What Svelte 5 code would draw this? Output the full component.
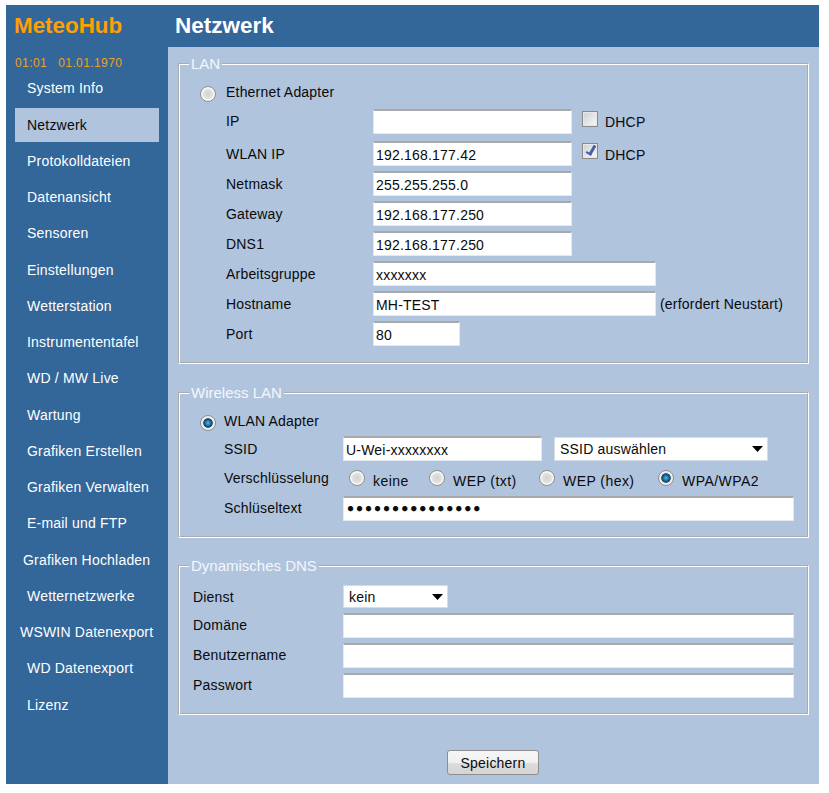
<script lang="ts">
  // MeteoHub network settings page
  const menu = [
    { label: 'System Info' },
    { label: 'Netzwerk', active: true },
    { label: 'Protokolldateien' },
    { label: 'Datenansicht' },
    { label: 'Sensoren' },
    { label: 'Einstellungen' },
    { label: 'Wetterstation' },
    { label: 'Instrumententafel' },
    { label: 'WD / MW Live' },
    { label: 'Wartung' },
    { label: 'Grafiken Erstellen' },
    { label: 'Grafiken Verwalten' },
    { label: 'E-mail und FTP' },
    { label: 'Grafiken Hochladen', indent: 8 },
    { label: 'Wetternetzwerke' },
    { label: 'WSWIN Datenexport', indent: 5 },
    { label: 'WD Datenexport' },
    { label: 'Lizenz' },
  ];

  const lanRows = [
    { label: 'Netmask', value: '255.255.255.0', size: 'mid' },
    { label: 'Gateway', value: '192.168.177.250', size: 'mid' },
    { label: 'DNS1', value: '192.168.177.250', size: 'mid' },
    { label: 'Arbeitsgruppe', value: 'xxxxxxx', size: 'long' },
  ];

  const crypto = [
    { label: 'keine', width: 80 },
    { label: 'WEP (txt)', width: 110 },
    { label: 'WEP (hex)', width: 119 },
    { label: 'WPA/WPA2', width: 110, checked: true },
  ];
</script>

<div class="app">
  <div class="brand">MeteoHub</div>
  <h1 class="title">Netzwerk</h1>

  <nav class="side">
    <div class="clock">01:01&nbsp;&nbsp; 01.01.1970</div>
    {#each menu as item}
      <a class="item" class:active={item.active} style:padding-left={item.indent ? `${item.indent}px` : undefined} href="#top">{item.label}</a>
    {/each}
  </nav>

  <main class="main">
    <fieldset class="box lan">
      <legend>LAN</legend>
      <div class="row adapter">
        <input type="radio" class="radio" name="lan" />
        <span>Ethernet Adapter</span>
      </div>
      <div class="row first">
        <span class="lbl raised">IP</span>
        <input class="txt mid" type="text" value="" />
        <input class="check" type="checkbox" />
        <span class="dhcp">DHCP</span>
      </div>
      <div class="row second">
        <span class="lbl">WLAN IP</span>
        <input class="txt mid" type="text" value="192.168.177.42" />
        <input class="check" type="checkbox" checked />
        <span class="dhcp">DHCP</span>
      </div>
      {#each lanRows as r}
        <div class="row">
          <span class="lbl">{r.label}</span>
          <input class="txt {r.size}" type="text" value={r.value} />
        </div>
      {/each}
      <div class="row">
        <span class="lbl">Hostname</span>
        <input class="txt long" type="text" value="MH-TEST" />
        <span class="note">(erfordert Neustart)</span>
      </div>
      <div class="row">
        <span class="lbl">Port</span>
        <input class="txt port" type="text" value="80" />
      </div>
    </fieldset>

    <fieldset class="box wifi">
      <legend>Wireless LAN</legend>
      <div class="row adapter">
        <input type="radio" class="radio" name="wifi" checked />
        <span>WLAN Adapter</span>
      </div>
      <div class="row">
        <span class="lbl">SSID</span>
        <input class="txt mid" type="text" value="U-Wei-xxxxxxxx" />
        <div class="pick ssid">
          <select><option>SSID auswählen</option></select>
          <svg class="arrow" width="11" height="6" viewBox="0 0 11 6"><path d="M0 0h11L5.5 6z" /></svg>
        </div>
      </div>
      <div class="row crypto">
        <span class="lbl raised">Verschlüsselung</span>
        {#each crypto as c}
          <span class="opt" style:width="{c.width}px">
            <input type="radio" class="radio" name="crypto" checked={c.checked} />
            <span>{c.label}</span>
          </span>
        {/each}
      </div>
      <div class="row">
        <span class="lbl raised">Schlüseltext</span>
        <input class="txt full secret" type="password" value="xxxxxxxxxxxxxxx" />
      </div>
    </fieldset>

    <fieldset class="box dyn">
      <legend>Dynamisches DNS</legend>
      <div class="row service">
        <span class="lbl">Dienst</span>
        <div class="pick small">
          <select><option>kein</option></select>
          <svg class="arrow" width="11" height="6" viewBox="0 0 11 6"><path d="M0 0h11L5.5 6z" /></svg>
        </div>
      </div>
      <div class="row">
        <span class="lbl raised">Domäne</span>
        <input class="txt full" type="text" />
      </div>
      <div class="row">
        <span class="lbl raised">Benutzername</span>
        <input class="txt full" type="text" />
      </div>
      <div class="row">
        <span class="lbl raised">Passwort</span>
        <input class="txt full" type="text" />
      </div>
    </fieldset>

    <div class="actions">
      <button type="button" class="save">Speichern</button>
    </div>
  </main>
</div>

<style>
  :global(body) {
    background: #fff;
    font-family: "Liberation Sans", Arial, sans-serif;
    font-size: 14px;
    letter-spacing: 0.2px;
    color: #0a0a0a;
  }

  .app {
    display: grid;
    grid-template-columns: 162px 651px;
    grid-template-rows: 42px 737px;
    margin: 5px 0 0 6px;
    width: 813px;
    background: #336699;
  }

  .brand {
    padding: 8px 0 0 8px;
    font-size: 22.4px;
    letter-spacing: 0;
    font-weight: bold;
    color: #ff9f00;
  }

  .title {
    margin: 0;
    padding: 8px 0 0 7px;
    font-size: 22.5px;
    letter-spacing: 0;
    font-weight: bold;
    color: #fff;
  }

  .side {
    display: flex;
    flex-direction: column;
  }

  .clock {
    height: 24.3px;
    padding: 9px 0 0 9px;
    box-sizing: border-box;
    font-size: 12px;
    letter-spacing: 0.4px;
    color: #eba21e;
  }

  .item {
    display: block;
    flex: none;
    box-sizing: border-box;
    width: 144px;
    height: 34px;
    margin: 0 0 2.25px 9px;
    padding-left: 12px;
    line-height: 35px;
    color: #fff;
    text-decoration: none;
    white-space: nowrap;
  }

  .item.active {
    background: #b0c4de;
    color: #0a0a0a;
  }

  .main {
    background: #b0c4de;
    padding: 10px 0 0 10px;
  }

  .box {
    box-sizing: border-box;
    width: 631px;
    margin: 0;
    padding: 0;
    min-width: 0;
    border: 2px groove #fff;
  }

  legend {
    margin-left: 9px;
    padding: 0 2px;
    color: #f4f7fb;
    font-size: 15px;
    letter-spacing: 0;
    line-height: 14px;
  }

  .lan { height: 307px; }
  .wifi { height: 152px; margin-top: 22px; }
  .dyn { height: 156px; margin-top: 21px; }

  .row {
    display: flex;
    align-items: center;
    height: 25px;
    margin-bottom: 5px;
  }

  .lan .row { padding-left: 46px; }
  .wifi .row { padding-left: 44px; }
  .dyn .row { padding-left: 13px; }

  .lbl { flex: none; }
  .raised { position: relative; top: -1px; }
  .lan .lbl { width: 147px; }
  .wifi .lbl { width: 119px; }
  .dyn .lbl { width: 150px; }

  .lan .adapter { padding-left: 20px; margin-top: 8px; margin-bottom: 5px; }
  .lan .adapter .radio { margin-right: 10px; position: relative; top: 2px; }
  .lan .second { margin-top: 7px; }
  .second .dhcp { position: relative; top: 1px; }

  .wifi .adapter { padding-left: 20px; margin-top: 8px; margin-bottom: 3px; }
  .wifi .adapter .radio { margin-right: 8px; position: relative; top: 2px; }

  .txt {
    box-sizing: border-box;
    height: 25px;
    padding: 1px 2px 0;
    border: 1px solid #e4e9f1;
    border-top: 2px solid #a9a9a9;
    border-radius: 1px;
    background: #fff;
    color: #0a0a0a;
    font: 14px "Liberation Sans", Arial, sans-serif;
    letter-spacing: 0.2px;
  }

  .mid { width: 199px; }
  .long { width: 283px; }
  .port { width: 87px; }
  .full { width: 451px; }

  .secret {
    font-family: "DejaVu Sans", sans-serif;
    font-size: 15.3px;
    letter-spacing: 0;
    -webkit-text-stroke: 0.8px #000;
  }

  .check {
    appearance: none;
    box-sizing: border-box;
    flex: none;
    position: relative;
    width: 16px;
    height: 16px;
    margin: 0 7px 6px 10px;
    border: 1px solid #8a8a8a;
    box-shadow: inset 0 0 0 1px #e8e8ea;
    background: linear-gradient(135deg, #cfd1d6, #f8f8fa);
  }

  .check:checked::after {
    content: "";
    position: absolute;
    left: 5px;
    top: 0;
    width: 3px;
    height: 9px;
    border: solid #4a5f9f;
    border-width: 0 3px 2px 0;
    transform: rotate(30deg);
  }

  .note { margin-left: 4px; }

  .radio {
    appearance: none;
    flex: none;
    box-sizing: border-box;
    width: 16px;
    height: 16px;
    margin: 0;
    border: 1px solid #8f8f8f;
    border-radius: 50%;
    background: radial-gradient(circle at 50% 50%, #d2d2d2 0, #e4e4e4 50%, #fcfcfc 62%, #e6e6e6 100%);
  }

  .radio:checked {
    background: radial-gradient(circle at 50% 50%, #5cb6e4 0, #14608f 32%, #0f4468 44%, #e8e8e8 52%, #fff 100%);
  }

  .crypto { height: 25px; margin-bottom: 5px; }
  .wifi .crypto .lbl { width: 125px; }

  .opt {
    display: flex;
    flex: none;
    align-items: center;
    gap: 8px;
    letter-spacing: 0.45px;
  }

  .opt .radio { position: relative; top: -1px; }
  .opt span { position: relative; top: 2px; }

  .pick {
    position: relative;
    flex: none;
  }

  .pick select {
    appearance: none;
    display: block;
    box-sizing: border-box;
    width: 100%;
    height: 100%;
    padding: 0 3px 0 5px;
    border: 1px solid #d5dce8;
    background: #fff;
    color: #0a0a0a;
    font: 14px "Liberation Sans", Arial, sans-serif;
    letter-spacing: 0.2px;
  }

  .arrow {
    position: absolute;
    right: 5px;
    top: 50%;
    margin-top: -3px;
    fill: #000;
    pointer-events: none;
  }

  .ssid { width: 214px; height: 24px; margin-left: 12px; }
  .small { width: 105px; height: 23px; }
  .service { margin-top: 11px; margin-bottom: 4px; }

  .actions {
    display: flex;
    justify-content: center;
    padding: 35px 0 0 0;
    width: 630px;
  }

  .save {
    box-sizing: border-box;
    width: 92px;
    height: 25px;
    padding: 0;
    border: 1px solid #8f8f8f;
    border-radius: 3px;
    background: linear-gradient(#f6f6f6, #f0f0f0 50%, #dcdcdc 55%, #d4d4d4);
    color: #0a0a0a;
    font: 14px "Liberation Sans", Arial, sans-serif;
    letter-spacing: 0.2px;
  }
</style>
